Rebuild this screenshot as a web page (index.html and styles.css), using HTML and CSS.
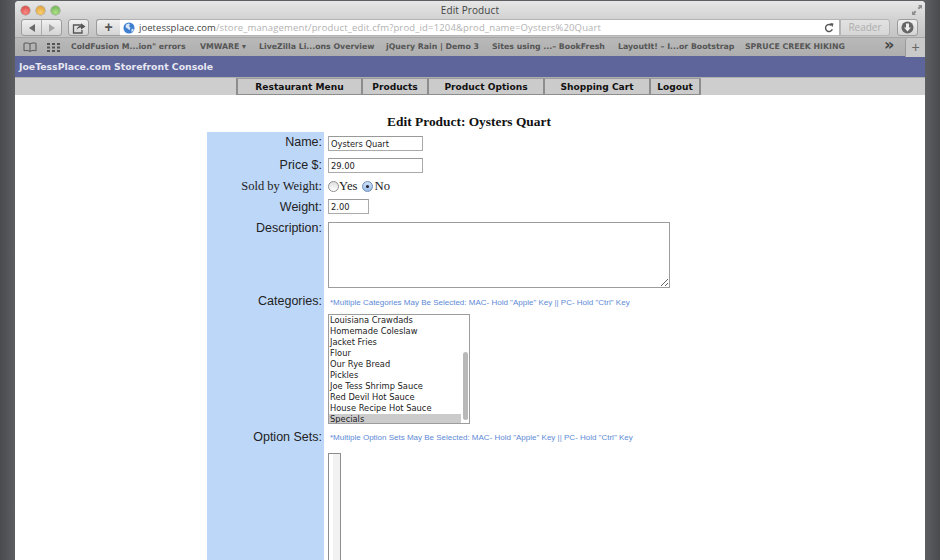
FILE: index.html
```html
<!DOCTYPE html>
<html lang="en">
<head>
<meta charset="utf-8">
<title>Edit Product</title>
<link rel="stylesheet" href="styles.css">
</head>
<body>
<div class="window">
  <div class="titlebar">
    <div class="lights"><span class="light red"></span><span class="light yellow"></span><span class="light green"></span></div>
    <div class="title">Edit Product</div>
    <svg class="fullscreen" width="12" height="12" viewBox="0 0 12 12"><path d="M7 1h4v4l-1.300-1.300L8 5.400 6.600 4 8.300 2.300zM5 11H1V7l1.300 1.300L4 6.600 5.400 8 3.700 9.700z" fill="#8e8e8e"/></svg>
  </div>
  <div class="toolbar">
    <div class="btn backfwd">
      <span class="seg"><svg width="8" height="8" viewBox="0 0 8 8"><path d="M1 4l6-4v8z" fill="#6a6a6a"/></svg></span>
      <span class="seg"><svg width="8" height="8" viewBox="0 0 8 8"><path d="M7 4L1 0v8z" fill="#a5a5a5"/></svg></span>
    </div>
    <div class="btn share"><svg width="14" height="12" viewBox="0 0 14 12"><path d="M9 3H1.500v8h8.500V8" fill="none" stroke="#555" stroke-width="1.300"/><path d="M4.500 8C5 5 7 3.800 9 3.800V1.200L13.500 4.500 9 7.500V5.400C7 5.400 5.500 6.300 4.500 8z" fill="#555"/></svg></div>
    <div class="address">
      <span class="plus">+</span>
      <div class="url">
        <svg class="globe" width="12" height="12" viewBox="0 0 13 13"><circle cx="6.500" cy="6.500" r="6" fill="#3f7fd0"/><path d="M3 3l3-1.500 1.500 1-1 2 1.500 1.500-1 3-2-2-2-1zM9 8l2-1 .5 2-2 2z" fill="#d9e6f4"/></svg>
        <span class="host">joetessplace.com</span><span class="path">/store_management/product_edit.cfm?prod_id=1204&amp;prod_name=Oysters%20Quart</span>
        <svg class="reload" width="10" height="10" viewBox="0 0 10 10"><path d="M8.300 6.300A3.500 3.500 0 1 1 7.500 2.500" fill="none" stroke="#555" stroke-width="1.400"/><path d="M6 0l3.500.500L8.500 4z" fill="#555"/></svg>
      </div>
      <span class="reader">Reader</span>
    </div>
    <div class="btn download"><svg width="13" height="13" viewBox="0 0 13 13"><circle cx="6.500" cy="6.500" r="6" fill="#666"/><path d="M5 2.500h3v4h2l-3.500 4-3.500-4h2z" fill="#eee"/></svg></div>
  </div>
  <div class="bookmarks">
    <svg class="bm-icon" width="14" height="10" viewBox="0 0 14 10"><path d="M7 2C5.500.800 3 .800 1 1.300v7.500C3 8.300 5.500 8.300 7 9.500 8.500 8.300 11 8.300 13 8.800V1.300C11 .800 8.500.800 7 2zM7 2v7.500" fill="none" stroke="#555" stroke-width="1"/></svg>
    <svg class="bm-icon grid-icon" width="13" height="9" viewBox="0 0 13 9"><path d="M0 0h3v2H0zM5 0h3v2H5zM10 0h3v2h-3zM0 3.500h3v2H0zM5 3.500h3v2H5zM10 3.500h3v2h-3zM0 7h3v2H0zM5 7h3v2H5zM10 7h3v2h-3z" fill="#555"/></svg>
    <span class="bm bm1">ColdFusion M...ion" errors</span>
    <span class="bm bm2">VMWARE ▾</span>
    <span class="bm bm3">LiveZilla Li...ons Overview</span>
    <span class="bm bm4">jQuery Rain | Demo 3</span>
    <span class="bm bm5">Sites using ...– BookFresh</span>
    <span class="bm bm6">LayoutIt! – I...or Bootstrap</span>
    <span class="bm bm7">SPRUCE CREEK HIKING</span>
    <span class="more">»</span>
    <span class="newtab">+</span>
  </div>
  <div class="site-header">JoeTessPlace.com Storefront Console</div>
  <nav class="nav">
    <a class="nav-item w-menu">Restaurant Menu</a><a class="nav-item w-products">Products</a><a class="nav-item w-options">Product Options</a><a class="nav-item w-cart">Shopping Cart</a><a class="nav-item w-logout">Logout</a>
  </nav>
  <main class="page">
    <h1 class="heading">Edit Product: Oysters Quart</h1>
    <div class="form">
      <div class="label r-name">Name:</div>
      <div class="field r-name"><input class="text wide" type="text" value="Oysters Quart"></div>
      <div class="label r-price">Price $:</div>
      <div class="field r-price"><input class="text wide" type="text" value="29.00"></div>
      <div class="label serif r-sold">Sold by Weight:</div>
      <div class="field serif radios r-sold">
        <span class="radio"></span><span>Yes</span>
        <span class="radio on"></span><span>No</span>
      </div>
      <div class="label r-weight">Weight:</div>
      <div class="field r-weight"><input class="text narrow" type="text" value="2.00"></div>
      <div class="label r-desc">Description:</div>
      <div class="field r-desc"><textarea class="area"></textarea></div>
      <div class="label r-cat">Categories:</div>
      <div class="field r-cat">
        <p class="hint">*Multiple Categories May Be Selected: MAC- Hold "Apple" Key || PC- Hold "Ctrl" Key</p>
        <div class="listbox">
          <div class="opt">Louisiana Crawdads</div>
          <div class="opt">Homemade Coleslaw</div>
          <div class="opt">Jacket Fries</div>
          <div class="opt">Flour</div>
          <div class="opt">Our Rye Bread</div>
          <div class="opt">Pickles</div>
          <div class="opt">Joe Tess Shrimp Sauce</div>
          <div class="opt">Red Devil Hot Sauce</div>
          <div class="opt">House Recipe Hot Sauce</div>
          <div class="opt selected">Specials</div>
          <span class="thumb"></span>
        </div>
      </div>
      <div class="label r-opt">Option Sets:</div>
      <div class="field r-opt">
        <p class="hint hint-opt">*Multiple Option Sets May Be Selected: MAC- Hold "Apple" Key || PC- Hold "Ctrl" Key</p>
        <div class="emptybox"></div>
      </div>
    </div>
  </main>
</div>
</body>
</html>
```

FILE: styles.css
```css
* { box-sizing: border-box; }
html, body { margin: 0; height: 100%; overflow: hidden; }
body {
  background: linear-gradient(90deg, #4a4b4f 0, #5d5e62 15px, #5d5e62 925px, #4a4b4f 100%);
  font-family: "Liberation Sans", sans-serif;
  padding: 1px 15px 0;
}
.window {
  height: 559px;
  background: #fff;
  border-radius: 4px 4px 0 0;
  overflow: hidden;
  display: flex;
  flex-direction: column;
}
.titlebar {
  height: 18px;
  flex: none;
  display: flex;
  align-items: center;
  position: relative;
  background: linear-gradient(#e6e6e6, #d2d2d2);
}
.lights { display: flex; gap: 6px; padding: 1px 0 0 6px; }
.light { width: 9px; height: 9px; border-radius: 50%; box-shadow: 0 0 0 .5px rgba(0,0,0,.35); }
.red { background: radial-gradient(circle at 50% 70%, #f58a85, #d3403a); }
.yellow { background: radial-gradient(circle at 50% 70%, #f7cf74, #d9952a); }
.green { background: radial-gradient(circle at 50% 70%, #aee08a, #64a94a); }
.title {
  position: absolute;
  left: 0; right: 0; top: 2px;
  text-align: center;
  font: 10px/14px "Open Sans", sans-serif;
  letter-spacing: .1px;
  color: #444;
}
.fullscreen { position: absolute; right: 2px; top: 3px; }
.toolbar {
  height: 18px;
  flex: none;
  display: flex;
  align-items: center;
  padding: 0 0 1px 6px;
  background: linear-gradient(#d2d2d2, #c4c4c4);
}
.btn {
  height: 17px;
  border: 1px solid #9c9c9c;
  border-radius: 3px;
  background: linear-gradient(#f0f0f0, #d4d4d4);
  display: flex;
  align-items: center;
  justify-content: center;
}
.backfwd { width: 41px; }
.seg { flex: 1; display: flex; align-items: center; justify-content: center; height: 100%; }
.seg + .seg { border-left: 1px solid #ababab; }
.share { width: 21px; margin-left: 6px; }
.address {
  width: 794px;
  margin-left: 7px;
  height: 17px;
  display: flex;
  align-items: center;
}
.plus {
  width: 24px; height: 17px;
  border: 1px solid #9c9c9c;
  border-right: 0;
  border-radius: 3px 0 0 3px;
  background: linear-gradient(#f0f0f0, #d4d4d4);
  text-align: center;
  font: bold 14px/14px "Liberation Sans", sans-serif;
  color: #555;
}
.url {
  flex: 1;
  height: 17px;
  display: flex;
  align-items: center;
  background: #fff;
  border: 1px solid #b4b4b4;
  border-left: 0;
  font: 9.500px/14px "Open Sans", sans-serif;
  letter-spacing: .05px;
  white-space: nowrap;
}
.globe { margin: 0 4px 0 3px; flex: none; }
.host { color: #444; }
.path { color: #b2b2b2; letter-spacing: .15px; }
.reload { margin-left: auto; margin-right: 5px; flex: none; }
.reader {
  width: 50px; height: 17px;
  border: 1px solid #b4b4b4;
  border-radius: 0 3px 3px 0;
  background: linear-gradient(#e2e2e2, #d6d6d6);
  color: #aeaeae;
  text-align: center;
  font: 10px/15px "Open Sans", sans-serif;
}
.download { width: 21px; margin-left: 7px; }
.bookmarks {
  height: 19px;
  flex: none;
  display: flex;
  align-items: center;
  position: relative;
  padding-left: 8px;
  background: linear-gradient(#b9b9b9, #aeaeae);
  border-top: 1px solid #a5a5a5;
  font: bold 7.800px/12px "DejaVu Sans", sans-serif;
  color: #555;
  white-space: nowrap;
}
.bm-icon { flex: none; }
.grid-icon { margin-left: 10px; }
.bm { position: absolute; top: 3px; }
.bm1 { left: 56px; }
.bm2 { left: 185px; }
.bm3 { left: 244px; }
.bm4 { left: 371px; }
.bm5 { left: 477px; }
.bm6 { left: 603px; }
.bm7 { left: 730px; }
.more { position: absolute; left: 869px; top: -1px; font: bold 16px/16px "DejaVu Sans", sans-serif; color: #444; }
.newtab {
  position: absolute; right: 0; top: 0; width: 20px; height: 19px;
  background: #c9c9c9;
  border-left: 1px solid #9a9a9a;
  border-radius: 3px 0 0 0;
  text-align: center;
  font: 14px/19px "Liberation Sans", sans-serif;
  color: #666;
}
.site-header {
  height: 21px;
  flex: none;
  background: #5d659b;
  color: #e8e8f2;
  padding-left: 4px;
  font: bold 9.300px/22px "DejaVu Sans", sans-serif;
}
.nav {
  height: 18px;
  flex: none;
  display: flex;
  justify-content: center;
  background: #cecece;
  padding-right: 3px;
  border-top: 1px solid #b0b0b0;
}
.nav-item {
  height: 17px;
  border: 1px solid #8d8d8d;
  border-top-color: #9a9a9a;
  border-left-width: 2px;
  border-right: 0;
  background: #cbcbcb;
  font: bold 9.100px/16px "DejaVu Sans", sans-serif;
  color: #111;
  text-align: center;
}
.w-menu { width: 125px; }
.w-products { width: 66px; }
.w-options { width: 116px; }
.w-cart { width: 106px; }
.w-logout { width: 52px; border-right: 2px solid #8d8d8d; }
.page { flex: 1; min-height: 0; overflow: hidden; }
.heading {
  margin: 0;
  padding: 19px 2px 0 0;
  height: 37px;
  text-align: center;
  font: bold 13.400px/16px "Liberation Serif", serif;
  color: #111;
}
.form {
  margin-left: 192px;
  display: grid;
  grid-template-columns: 117px 1fr;
}
.label {
  background: #bdd7f9;
  text-align: right;
  font-size: 12.500px;
  line-height: 16px;
  color: #222;
  padding: 3px 2px 0 0;
}
.serif { font-family: "Liberation Serif", serif; }
.field { padding-left: 4px; }
.r-name, .r-price { height: 22px; }
.r-sold { height: 20px; }
.r-weight { height: 22px; }
.r-desc { height: 72px; }
.r-cat { height: 136px; }
.r-opt { height: 140px; }
.r-name.label, .r-sold.label, .r-desc.label { padding-top: 2px; }
.r-name.field, .r-price.field { padding-top: 4px; }
.r-weight.field { padding-top: 3px; }
.r-desc.field { padding-top: 4px; }
.text {
  display: block;
  height: 15px;
  margin: 0;
  padding: 1px 2px;
  border: 1px solid #aaa;
  border-top-color: #999;
  border-radius: 0;
  background: #fff;
  font: 8.300px/11px "DejaVu Sans", sans-serif;
  color: #222;
  outline: 0;
}
.wide { width: 95px; }
.narrow { width: 41px; }
.radios {
  display: flex;
  align-items: center;
  font-size: 12.700px;
  color: #222;
  padding: 1px 0 0 4px;
}
.radio {
  width: 11px; height: 11px;
  border-radius: 50%;
  border: 1px solid #8e8e8e;
  background: linear-gradient(#e0e0e0, #fff);
  display: flex;
  align-items: center;
  justify-content: center;
}
.radio + span + .radio { margin-left: 5px; margin-right: 1px; }
.radio.on { background: linear-gradient(#cfe0f6, #9dbfe8); border-color: #6d8cb8; }
.radio.on::after { content: ""; width: 3px; height: 3px; border-radius: 50%; background: #223; }
.area {
  display: block;
  width: 342px;
  height: 66px;
  margin: 0;
  padding: 0;
  border: 1px solid #9c9c9c;
  background: #fff;
  outline: 0;
}
.hint {
  margin: 0;
  padding: 8px 0 0 2px;
  height: 24px;
  font-size: 8px;
  line-height: 10px;
  color: #5d8ad6;
  white-space: nowrap;
}
.hint-opt { padding-top: 7px; height: 27px; }
.listbox {
  width: 142px;
  height: 110px;
  border: 1px solid #9c9c9c;
  position: relative;
  overflow: hidden;
  font: 8.300px/11px "DejaVu Sans", sans-serif;
  color: #222;
}
.opt { height: 11px; padding-left: 1px; white-space: nowrap; }
.selected { background: #cbcbcb; margin-right: 8px; }
.thumb {
  position: absolute;
  right: 1px; top: 37px;
  width: 5px; height: 68px;
  border-radius: 3px;
  background: #b9b9b9;
}
.emptybox {
  width: 13px;
  height: 120px;
  border: 1px solid #8e8e8e;
  background: linear-gradient(90deg, #fff 0 4px, #f2f2f2 4px);
}
```
